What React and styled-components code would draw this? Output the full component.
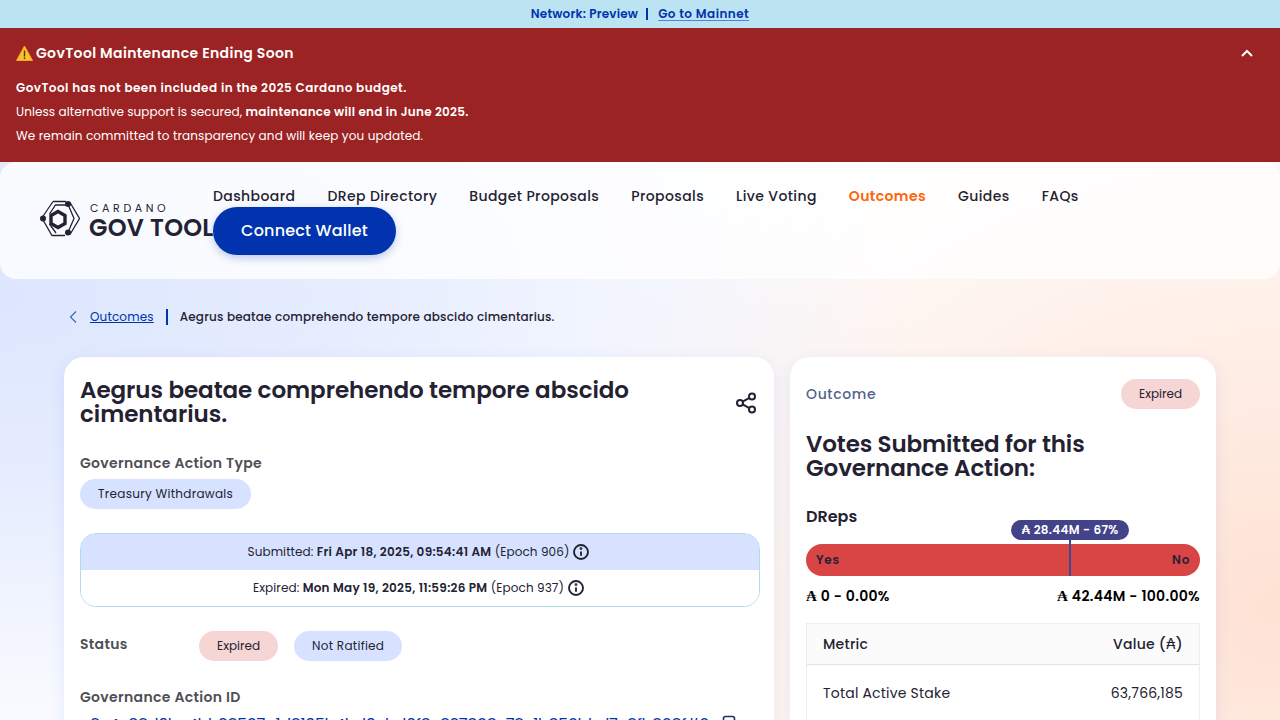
import React from "react";
import styled, { createGlobalStyle } from "styled-components";

const Global = createGlobalStyle`
  html, body { margin: 0; padding: 0; height: 720px; overflow: hidden; }
  body { font-family: Poppins, Inter, "Noto Sans", sans-serif; color: #242232; }
  * { box-sizing: border-box; }
  #root { height: 720px; overflow: hidden; }
`;

const Page = styled.div`
  width: 1280px;
  min-height: 720px;
  background:
    radial-gradient(920px 500px at 0% 38%, #dde6fe 0%, rgba(221,230,254,0.75) 35%, rgba(221,230,254,0) 100%),
    radial-gradient(780px 620px at 100% 78%, #fee2d4 0%, rgba(254,226,212,0) 100%),
    #fff;
`;

const NetworkBar = styled.div`
  height: 28px;
  background: #bbe3f2;
  display: flex;
  align-items: center;
  justify-content: center;
  gap: 8px;
  font-size: 12px;
  font-weight: 600;
  color: #0033ad;
`;
const NetworkName = styled.span`
  letter-spacing: 0.2px;
`;
const BarDivider = styled.span`
  width: 2px;
  height: 12px;
  background: #0033ad;
`;
const BarLink = styled.a`
  margin-left: 2px;
  color: #0033ad;
  letter-spacing: 0.46px;
  text-decoration: underline;
  text-decoration-color: rgba(0, 51, 173, 0.55);
  text-underline-offset: 2px;
`;

const Banner = styled.section`
  height: 134px;
  background: #9b2323;
  color: #fff;
  padding: 13px 26px 0 16px;
`;
const BannerHead = styled.div`
  display: flex;
  align-items: center;
  justify-content: space-between;
  height: 24px;
`;
const BannerTitle = styled.div`
  display: flex;
  align-items: center;
  gap: 3px;
  font-size: 14px;
  font-weight: 600;
  letter-spacing: 0.36px;
`;
const BannerBody = styled.div`
  margin-top: 11px;
  font-size: 12px;
  line-height: 24px;
  color: #fff;
`;
const BannerLine = styled.div`
  letter-spacing: ${(p) => p.$spacing || 0}px;
`;
const BannerStrong = styled.strong`
  font-weight: 600;
  letter-spacing: ${(p) => p.$spacing}px;
`;

const Header = styled.header`
  height: 117px;
  display: flex;
  align-items: flex-start;
  padding: 19px 40px 0;
  border-radius: 16px;
  background: rgba(255, 255, 255, 0.78);
`;
const Logo = styled.div`
  display: flex;
  align-items: center;
  gap: 9px;
  width: 173px;
  height: 37px;
  margin-top: 19px;
  flex: none;
  svg { flex: none; }
`;
const LogoText = styled.div`
  display: flex;
  flex-direction: column;
  white-space: nowrap;
  margin-top: 5px;
`;
const LogoTop = styled.span`
  margin: 1px 0 0 1px;
  font-size: 11px;
  line-height: 12px;
  letter-spacing: 3.6px;
  font-weight: 400;
`;
const LogoBottom = styled.span`
  font-size: 24px;
  line-height: 28px;
  font-weight: 600;
  letter-spacing: 0.25px;
`;
const NavWrap = styled.nav`
  display: flex;
  flex-wrap: wrap;
  align-items: center;
  column-gap: 32px;
`;
const NavItem = styled.a`
  font-size: 14px;
  line-height: 30px;
  font-weight: ${(p) => (p.$active ? 600 : 500)};
  letter-spacing: 0.4px;
  color: ${(p) => (p.$active ? "#ff640a" : "#242232")};
`;
const ConnectButton = styled.button`
  flex-basis: 183px;
  height: 48px;
  margin-top: -4px;
  padding: 0 0 2px;
  border: 0;
  border-radius: 24px;
  background: #0033ad;
  color: #fff;
  font: 500 16px Poppins, Inter, sans-serif;
  letter-spacing: 0.2px;
  box-shadow: 0 3px 8px rgba(0, 51, 173, 0.25);
`;
const NavBreak = styled.span`
  flex-basis: 100%;
  height: 0;
`;

const Breadcrumbs = styled.div`
  display: flex;
  align-items: center;
  height: 16px;
  margin: 30px 0 32px;
  padding-left: 69px;
  font-size: 12px;
  font-weight: 500;
`;
const CrumbLink = styled.a`
  margin-left: 13px;
  color: #0033ad;
  font-weight: 400;
  letter-spacing: 0.15px;
  text-decoration: underline;
`;
const CrumbDivider = styled.span`
  width: 2px;
  height: 16px;
  margin: 0 12px;
  background: #0033ad;
`;
const CrumbTitle = styled.span`
  letter-spacing: 0.19px;
`;

const Columns = styled.main`
  display: grid;
  grid-template-columns: 710px 426px;
  gap: 16px;
  padding: 0 64px;
  align-items: start;
`;
const Card = styled.article`
  background: #fff;
  border-radius: 20px;
  padding: ${(p) => (p.$wide ? "17px 14px 16px 16px" : "16px")};
  height: 420px;
  box-shadow: 0 4px 16px rgba(47, 98, 220, 0.1);
`;
const TitleRow = styled.div`
  display: flex;
  align-items: center;
  justify-content: space-between;
  padding: 5px 2px 0 0;
`;
const Title = styled.h1`
  margin: -1px 0 1px;
  width: 620px;
  font-size: 23px;
  line-height: 24px;
  font-weight: 600;
  letter-spacing: -0.05px;
`;
const Label = styled.div`
  font-size: 14px;
  line-height: 20px;
  font-weight: 600;
  color: #4f4f57;
  letter-spacing: 0.33px;
`;
const TypeBlock = styled.div`
  margin-top: 26px;
`;
const Pill = styled.span`
  display: inline-flex;
  align-items: center;
  height: 30px;
  padding: 0 18px;
  border-radius: 15px;
  font-size: 12px;
  font-weight: 400;
  letter-spacing: ${(p) => (p.$tone === "red" ? "0" : "0.28px")};
  background: ${(p) => (p.$tone === "red" ? "#f6d5d5" : "#d6e2ff")};
`;
const PillSlot = styled.div`
  margin-top: 6px;
`;
const Timeline = styled.div`
  margin-top: 24px;
  border: 1px solid #addde9;
  border-radius: 16px;
  overflow: hidden;
`;
const TimeRow = styled.div`
  height: 36px;
  padding-right: 2px;
  display: flex;
  align-items: center;
  justify-content: center;
  gap: 3px;
  font-size: 12px;
  letter-spacing: 0.1px;
  background: ${(p) => (p.$filled ? "#d6e2ff" : "#fff")};
  strong { font-weight: 600; letter-spacing: 0.27px; }
`;
const StatusRow = styled.div`
  margin-top: 24px;
  display: flex;
  align-items: flex-start;
`;
const StatusLabel = styled(Label)`
  width: 119px;
  margin-top: 3px;
`;
const StatusPills = styled.div`
  display: flex;
  gap: 16px;
`;
const IdBlock = styled.div`
  margin-top: 26px;
`;
const IdRow = styled.div`
  margin-top: 6px;
  display: flex;
  align-items: flex-start;
  gap: 8px;
  padding-left: 10px;
`;
const IdText = styled.span`
  font-size: 16px;
  line-height: 24px;
  color: #0033ad;
  letter-spacing: -0.35px;
  white-space: nowrap;
`;

const OutcomeHead = styled.div`
  display: flex;
  align-items: center;
  justify-content: space-between;
  padding-top: 6px;
`;
const OutcomeLabel = styled.span`
  font-size: 14px;
  font-weight: 500;
  letter-spacing: 0.65px;
  color: #506288;
`;
const VotesTitle = styled.h2`
  margin: 23px 0 0;
  font-size: 23px;
  line-height: 24px;
  font-weight: 600;
  letter-spacing: -0.1px;
`;
const GroupTitle = styled.div`
  margin-top: 25px;
  font-size: 16px;
  line-height: 24px;
  font-weight: 600;
`;
const BarArea = styled.div`
  position: relative;
  margin-top: 15px;
`;
const VoteBar = styled.div`
  height: 32px;
  padding: 0 10px;
  border-radius: 16px;
  background: #d94444;
  display: flex;
  align-items: center;
  justify-content: space-between;
  font-size: 12px;
  font-weight: 600;
  letter-spacing: 0.7px;
`;
const ThresholdBubble = styled.div`
  position: absolute;
  left: 205px;
  top: -24px;
  width: 118px;
  height: 20px;
  border-radius: 10px;
  background: #43438a;
  color: #fff;
  font-size: 12px;
  font-weight: 600;
  display: flex;
  align-items: center;
  justify-content: center;
  letter-spacing: 0.3px;
`;
const ThresholdLine = styled.div`
  position: absolute;
  left: 263px;
  top: -4px;
  width: 2px;
  height: 36px;
  background: #3b4a8c;
`;
const Amounts = styled.div`
  display: flex;
  justify-content: space-between;
  margin-top: 10px;
  font-size: 14px;
  line-height: 20px;
  font-weight: 600;
  letter-spacing: 0.3px;
  color: #000;
`;
const AdaSerif = styled.span`
  font-family: "DejaVu Serif", serif;
  font-weight: 700;
  font-size: 15px;
  line-height: 20px;
`;
const Table = styled.div`
  margin-top: 17px;
  border: 1px solid #eeeeee;
  font-size: 14px;
`;
const TableHead = styled.div`
  height: 41px;
  padding: 0 16px;
  display: flex;
  align-items: center;
  justify-content: space-between;
  background: #fbfbfb;
  border-bottom: 1px solid #e2e2e2;
  font-weight: 500;
  letter-spacing: 0.25px;
`;
const AdaThin = styled.span`
  font-weight: 400;
`;
const TableRow = styled.div`
  height: 57px;
  padding: 0 16px;
  display: flex;
  align-items: center;
  justify-content: space-between;
  font-weight: 400;
  letter-spacing: 0.2px;
`;

const Warn = () => (
  <svg width="17" height="17" viewBox="0 0 17 17">
    <path d="M8.5 1 L16.5 15.5 H0.5 Z" fill="#fbc02d" stroke="#f5a623" strokeWidth="1" strokeLinejoin="round" />
    <rect x="7.8" y="5.5" width="1.4" height="6" fill="#4a3a10" />
    <rect x="7.8" y="12.4" width="1.4" height="1.6" fill="#4a3a10" />
  </svg>
);

const ChevronUp = () => (
  <svg width="14" height="14" viewBox="0 0 14 14" fill="none" stroke="#fff" strokeWidth="2">
    <path d="M2 10 L7 5 L12 10" />
  </svg>
);

const ChevronLeft = () => (
  <svg width="8" height="14" viewBox="0 0 8 14" fill="none" stroke="#3f64c4" strokeWidth="1.2">
    <path d="M7 1.5 L1.5 7 L7 12.5" />
  </svg>
);

const LogoMark = () => (
  <svg width="40" height="37" viewBox="0 0 40 37" fill="none" stroke="#242232">
    <path d="M13 1.5 H26 M13 1.5 L2.5 17" strokeWidth="1.3" />
    <path d="M30 2.5 L39.5 18.5 L30 34.5" strokeWidth="1.3" />
    <path d="M3 20 L12 35.5 H25" strokeWidth="1.3" />
    <path d="M27 5 H15.5 L9.5 14" strokeWidth="1.3" />
    <path d="M28.5 5.5 L34 18.5 L29 30 M9.5 24 L16 33" strokeWidth="1.3" />
    <path d="M18 11.5 L25 15.5 L25 23.5 L18 27.5 L11 23.5 L11 15.5 Z" strokeWidth="3.4" />
    <circle cx="28" cy="4" r="3" fill="#242232" stroke="none" />
    <circle cx="3" cy="18.5" r="3" fill="#242232" stroke="none" />
    <circle cx="28" cy="32.5" r="3" fill="#242232" stroke="none" />
  </svg>
);

const ShareIcon = () => (
  <svg width="24" height="24" viewBox="0 0 24 24" fill="none" stroke="#242232" strokeWidth="2">
    <circle cx="18" cy="5.5" r="3" />
    <circle cx="6" cy="12" r="3" />
    <circle cx="18" cy="18.5" r="3" />
    <path d="M8.7 10.6 L15.3 6.9 M8.7 13.4 L15.3 17.1" />
  </svg>
);

const InfoIcon = () => (
  <svg width="18" height="18" viewBox="0 0 18 18" fill="none" stroke="#242232" strokeWidth="1.9">
    <circle cx="9" cy="9" r="7" />
    <path d="M9 8.5 V12.8" />
    <circle cx="9" cy="5.6" r="0.5" fill="#242232" />
  </svg>
);

const CopyIcon = () => (
  <svg width="24" height="24" viewBox="0 0 24 24" fill="none" stroke="#1c2f6e" strokeWidth="1.6">
    <rect x="6.5" y="3.5" width="11" height="16" rx="2" />
  </svg>
);

const navItems = ["Dashboard", "DRep Directory", "Budget Proposals", "Proposals", "Live Voting", "Outcomes", "Guides", "FAQs"];

export default function App() {
  return (
    <Page>
      <Global />
      <NetworkBar>
        <NetworkName>Network: Preview</NetworkName>
        <BarDivider />
        <BarLink>Go to Mainnet</BarLink>
      </NetworkBar>
      <Banner>
        <BannerHead>
          <BannerTitle><Warn /> GovTool Maintenance Ending Soon</BannerTitle>
          <ChevronUp />
        </BannerHead>
        <BannerBody>
          <BannerLine><BannerStrong $spacing={0.46}>GovTool has not been included in the 2025 Cardano budget.</BannerStrong></BannerLine>
          <BannerLine $spacing={0.08}>Unless alternative support is secured, <BannerStrong $spacing={0.26}>maintenance will end in June 2025.</BannerStrong></BannerLine>
          <BannerLine $spacing={0.13}>We remain committed to transparency and will keep you updated.</BannerLine>
        </BannerBody>
      </Banner>
      <Header>
        <Logo>
          <LogoMark />
          <LogoText>
            <LogoTop>CARDANO</LogoTop>
            <LogoBottom>GOV TOOL</LogoBottom>
          </LogoText>
        </Logo>
        <NavWrap>
          {navItems.map((n) => (
            <NavItem key={n} $active={n === "Outcomes"}>{n}</NavItem>
          ))}
          <NavBreak />
          <ConnectButton>Connect Wallet</ConnectButton>
        </NavWrap>
      </Header>
      <Breadcrumbs>
        <ChevronLeft />
        <CrumbLink>Outcomes</CrumbLink>
        <CrumbDivider />
        <CrumbTitle>Aegrus beatae comprehendo tempore abscido cimentarius.</CrumbTitle>
      </Breadcrumbs>
      <Columns>
        <Card $wide>
          <TitleRow>
            <Title>Aegrus beatae comprehendo tempore abscido cimentarius.</Title>
            <ShareIcon />
          </TitleRow>
          <TypeBlock>
            <Label>Governance Action Type</Label>
            <PillSlot><Pill>Treasury Withdrawals</Pill></PillSlot>
          </TypeBlock>
          <Timeline>
            <TimeRow $filled>
              <span>Submitted: <strong>Fri Apr 18, 2025, 09:54:41 AM</strong> (Epoch 906)</span>
              <InfoIcon />
            </TimeRow>
            <TimeRow>
              <span>Expired: <strong>Mon May 19, 2025, 11:59:26 PM</strong> (Epoch 937)</span>
              <InfoIcon />
            </TimeRow>
          </Timeline>
          <StatusRow>
            <StatusLabel>Status</StatusLabel>
            <StatusPills>
              <Pill $tone="red">Expired</Pill>
              <Pill>Not Ratified</Pill>
            </StatusPills>
          </StatusRow>
          <IdBlock>
            <Label>Governance Action ID</Label>
            <IdRow>
              <IdText>8c4c88d9bc4bb38507a1d8195b4bd9ebd6f8e837808c78c1b850bbd7e8fb808f#0</IdText>
              <CopyIcon />
            </IdRow>
          </IdBlock>
        </Card>
        <Card>
          <OutcomeHead>
            <OutcomeLabel>Outcome</OutcomeLabel>
            <Pill $tone="red">Expired</Pill>
          </OutcomeHead>
          <VotesTitle>Votes Submitted for this Governance Action:</VotesTitle>
          <GroupTitle>DReps</GroupTitle>
          <BarArea>
            <ThresholdBubble>₳ 28.44M - 67%</ThresholdBubble>
            <ThresholdLine />
            <VoteBar><span>Yes</span><span>No</span></VoteBar>
          </BarArea>
          <Amounts>
            <span><AdaSerif>₳</AdaSerif> 0 - 0.00%</span>
            <span><AdaSerif>₳</AdaSerif> 42.44M - 100.00%</span>
          </Amounts>
          <Table>
            <TableHead><span>Metric</span><span>Value (<AdaThin>₳</AdaThin>)</span></TableHead>
            <TableRow><span>Total Active Stake</span><span>63,766,185</span></TableRow>
          </Table>
        </Card>
      </Columns>
    </Page>
  );
}
